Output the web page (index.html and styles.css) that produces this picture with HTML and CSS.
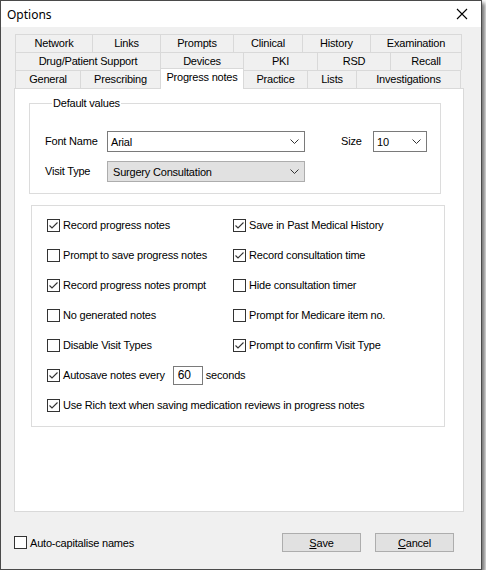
FILE: index.html
```html
<!DOCTYPE html>
<html lang="en">
<head>
    <meta charset="UTF-8">
    <title>Options</title>
    <link rel="stylesheet" href="styles.css">
</head>
<body>
    <div class="window">
        <div class="title-bar">
            <span class="title">Options</span>
            <svg class="close" width="12" height="12" viewBox="0 0 12 12">
                <path d="M1 1 L11 11 M11 1 L1 11" stroke="#000" stroke-width="1.1" fill="none"/>
            </svg>
        </div>

        <div class="content">
            <div class="tabs">
                <div class="tab-row">
                    <div class="tab" style="width:77px">Network</div>
                    <div class="tab" style="width:68px">Links</div>
                    <div class="tab" style="width:73px">Prompts</div>
                    <div class="tab" style="width:69px">Clinical</div>
                    <div class="tab" style="width:68px">History</div>
                    <div class="tab" style="width:92px">Examination</div>
                </div>
                <div class="tab-row">
                    <div class="tab" style="width:145px">Drug/Patient Support</div>
                    <div class="tab" style="width:83px">Devices</div>
                    <div class="tab" style="width:74px">PKI</div>
                    <div class="tab" style="width:73px">RSD</div>
                    <div class="tab" style="width:72px">Recall</div>
                </div>
                <div class="tab-row">
                    <div class="tab" style="width:65px">General</div>
                    <div class="tab" style="width:80px">Prescribing</div>
                    <div class="tab selected" style="width:84px">Progress notes</div>
                    <div class="tab" style="width:64px">Practice</div>
                    <div class="tab" style="width:49px">Lists</div>
                    <div class="tab" style="width:105px">Investigations</div>
                </div>
            </div>

            <div class="tab-panel">
                <fieldset class="group defaults">
                    <legend>Default values</legend>
                    <div class="defaults-grid">
                        <label class="field-label">Font Name</label>
                        <div class="combo">
                            <span>Arial</span>
                            <svg class="chev" width="9" height="5" viewBox="0 0 9 5"><path d="M0.5 0.5 L4.5 4.5 L8.5 0.5" stroke="#333" fill="none"/></svg>
                        </div>
                        <label class="field-label size-label">Size</label>
                        <div class="combo">
                            <span>10</span>
                            <svg class="chev" width="9" height="5" viewBox="0 0 9 5"><path d="M0.5 0.5 L4.5 4.5 L8.5 0.5" stroke="#333" fill="none"/></svg>
                        </div>

                        <label class="field-label">Visit Type</label>
                        <div class="combo dropdown">
                            <span>Surgery Consultation</span>
                            <svg class="chev" width="9" height="5" viewBox="0 0 9 5"><path d="M0.5 0.5 L4.5 4.5 L8.5 0.5" stroke="#333" fill="none"/></svg>
                        </div>
                    </div>
                </fieldset>

                <div class="group options">
                    <label class="check"><span class="box checked"></span>Record progress notes</label>
                    <label class="check"><span class="box checked"></span>Save in Past Medical History</label>

                    <label class="check"><span class="box"></span>Prompt to save progress notes</label>
                    <label class="check"><span class="box checked"></span>Record consultation time</label>

                    <label class="check"><span class="box checked"></span>Record progress notes prompt</label>
                    <label class="check"><span class="box"></span>Hide consultation timer</label>

                    <label class="check"><span class="box"></span>No generated notes</label>
                    <label class="check"><span class="box"></span>Prompt for Medicare item no.</label>

                    <label class="check"><span class="box"></span>Disable Visit Types</label>
                    <label class="check"><span class="box checked"></span>Prompt to confirm Visit Type</label>

                    <div class="check wide">
                        <span class="box checked"></span>Autosave notes every
                        <span class="num">60</span>
                        seconds
                    </div>

                    <label class="check wide"><span class="box checked"></span>Use Rich text when saving medication reviews in progress notes</label>
                </div>
            </div>

            <div class="footer">
                <label class="check"><span class="box"></span>Auto-capitalise names</label>
                <div class="buttons">
                    <button class="btn"><u>S</u>ave</button>
                    <button class="btn"><u>C</u>ancel</button>
                </div>
            </div>
        </div>
    </div>
</body>
</html>
```

FILE: styles.css
```css
body {
    margin: 0;
    background: #ffffff;
    font-family: "Liberation Sans", Arial, sans-serif;
    font-size: 11px;
    letter-spacing: -0.2px;
    color: #000;
}

.window {
    width: 480px;
    height: 568px;
    border: 1px solid #4a4a4a;
    background: #f0f0f0;
    display: flex;
    flex-direction: column;
    box-shadow: 3px 3px 4px rgba(0, 0, 0, 0.55);
}

.title-bar {
    height: 26px;
    background: #ffffff;
    display: flex;
    align-items: center;
    justify-content: space-between;
    padding: 0 13px 0 6px;
}

.title {
    font-family: "Noto Sans", sans-serif;
    font-size: 12px;
    letter-spacing: 0;
}

.content {
    flex: 1;
    padding: 7px 0 0 13px;
    display: flex;
    flex-direction: column;
}

/* tab strip */
.tabs {
    margin-left: 1px;
}

.tab-row {
    display: flex;
    height: 18px;
}

.tab {
    box-sizing: border-box;
    height: 18px;
    border: 1px solid #d9d9d9;
    border-right: none;
    border-bottom: none;
    background: #f0f0f0;
    text-align: center;
    line-height: 17px;
}

.tab:last-child {
    border-right: 1px solid #d9d9d9;
}

.tab.selected {
    background: #ffffff;
    height: 21px;
    margin-top: -2px;
    margin-bottom: -1px;
    line-height: 17px;
    position: relative;
    z-index: 1;
    border-right: 1px solid #d9d9d9;
    margin-right: -1px;
}

.tab-panel {
    box-sizing: border-box;
    width: 450px;
    height: 424px;
    background: #ffffff;
    border: 1px solid #d9d9d9;
    padding: 8px 0 0 14px;
}

/* group boxes */
.group {
    border: 1px solid #dcdcdc;
    margin: 0;
}

.defaults {
    width: 412px;
    box-sizing: border-box;
    padding: 0 0 11px 15px;
    min-width: 0;
}

.defaults legend {
    padding: 0 1px;
    margin-left: 7px;
}

.defaults-grid {
    display: grid;
    grid-template-columns: 62px 198px 36px 32px 54px;
    grid-auto-rows: 21px;
    row-gap: 9px;
    align-items: center;
    margin-top: 22px;
}

.field-label {
    padding-bottom: 2px;
}

.size-label {
    grid-column: 4;
}

.combo {
    box-sizing: border-box;
    height: 21px;
    border: 1px solid #7a7a7a;
    background: #ffffff;
    display: flex;
    align-items: center;
    justify-content: space-between;
    padding: 0 5px 0 3px;
}

.combo.dropdown {
    grid-column: 2;
    background: #e1e1e1;
    border-color: #adadad;
    padding-left: 5px;
}

.options {
    box-sizing: border-box;
    width: 414px;
    margin: 11px 0 0 2px;
    padding: 4px 0 6px 15px;
    display: grid;
    grid-template-columns: 186px 1fr;
    grid-auto-rows: 30px;
}

.wide {
    grid-column: 1 / 3;
}

/* checkboxes */
.check {
    display: flex;
    align-items: center;
    white-space: nowrap;
}

.box {
    box-sizing: border-box;
    width: 13px;
    height: 13px;
    border: 1px solid #333333;
    background: #ffffff;
    margin-right: 3px;
    flex-shrink: 0;
}

.box.checked {
    background: #ffffff url("data:image/svg+xml;utf8,<svg xmlns='http://www.w3.org/2000/svg' width='11' height='11' viewBox='0 0 11 11'><path d='M1.5 5.5 L4 8 L9.5 2.5' stroke='%23333' stroke-width='1.1' fill='none'/></svg>") no-repeat center;
}

.num {
    box-sizing: border-box;
    width: 30px;
    height: 19px;
    border: 1px solid #7a7a7a;
    margin: 0 3px 0 8px;
    padding-left: 4px;
    line-height: 17px;
    font-size: 12px;
}

/* bottom row */
.footer {
    display: flex;
    align-items: center;
    justify-content: space-between;
    width: 440px;
    margin-top: 21px;
}

.buttons {
    display: flex;
    gap: 14px;
}

.btn {
    box-sizing: border-box;
    width: 79px;
    height: 19px;
    background: #e1e1e1;
    border: 1px solid #adadad;
    font-family: "Liberation Sans", Arial, sans-serif;
    font-size: 11px;
    letter-spacing: -0.2px;
    padding: 0;
}
```
